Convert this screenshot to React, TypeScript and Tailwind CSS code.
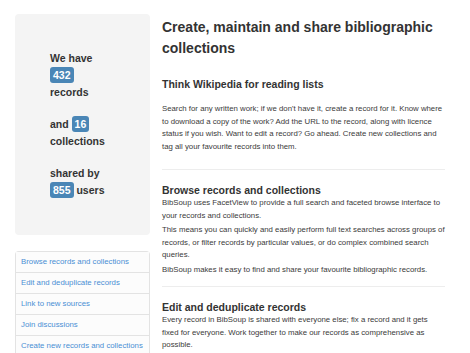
const links = [
  "Browse records and collections",
  "Edit and deduplicate records",
  "Link to new sources",
  "Join discussions",
  "Create new records and collections",
];

function Badge({ n }: { n: number }) {
  return (
    <span className="inline-block rounded-[3px] bg-[#4a86b6] px-[3px] leading-[16px] text-white">
      {n}
    </span>
  );
}

export default function App() {
  return (
    <div
      className="flex h-[353px] w-[470px] gap-3 overflow-hidden bg-white pl-[15px] pt-[14px] text-[#333]"
      style={{ fontFamily: '"Liberation Sans", Arial, sans-serif' }}
    >
      {/* left column: stats well + nav */}
      <div className="flex w-[135px] shrink-0 flex-col">
        <div className="rounded-[4px] bg-[#f4f4f4] pb-[36px] pl-[35px] pt-[36px] text-[10.5px] font-bold leading-[17px] text-[#333]">
          <p>We have</p>
          <p>
            <Badge n={432} />
          </p>
          <p>records</p>
          <p className="mt-[15px]">
            and <Badge n={16} />
          </p>
          <p>collections</p>
          <p className="mt-[15px]">shared by</p>
          <p>
            <Badge n={855} /> users
          </p>
        </div>
        <ul className="mt-[16px] rounded-t-[4px] border border-b-0 border-[#e3e3e3]">
          {links.map((l) => (
            <li
              key={l}
              className="border-b border-[#e3e3e3] bg-[#fcfcfc] pl-[5px] text-[7.8px] leading-[20px] text-[#4a8fd4]"
            >
              {l}
            </li>
          ))}
        </ul>
      </div>

      {/* right column: intro */}
      <div className="w-[283px] shrink-0 text-[7.8px] leading-[12.5px] text-[#3a3a3a]">
        <h1 className="mt-[3px] text-[14px] font-bold leading-[21px] text-[#333]">
          Create, maintain and share bibliographic collections
        </h1>

        <h3 className="mt-[18px] text-[10.5px] font-bold leading-[14px] text-[#333]">
          Think Wikipedia for reading lists
        </h3>
        <p className="mt-[12px]">
          Search for any written work; if we don't have it, create a record for it. Know where
          to download a copy of the work? Add the URL to the record, along with licence
          status if you wish. Want to edit a record? Go ahead. Create new collections and
          tag all your favourite records into them.
        </p>

        <hr className="mt-[16px] border-[#ededed]" />

        <h3 className="mt-[13px] text-[10.5px] font-bold leading-[14px] text-[#333]">
          Browse records and collections
        </h3>
        <p>
          BibSoup uses FacetView to provide a full search and faceted browse interface to
          your records and collections.
        </p>
        <p className="mt-[2px]">
          This means you can quickly and easily perform full text searches across groups of
          records, or filter records by particular values, or do complex combined search
          queries.
        </p>
        <p className="mt-[2px]">
          BibSoup makes it easy to find and share your favourite bibliographic records.
        </p>

        <hr className="mt-[10px] border-[#ededed]" />

        <h3 className="mt-[13px] text-[10.5px] font-bold leading-[14px] text-[#333]">
          Edit and deduplicate records
        </h3>
        <p>
          Every record in BibSoup is shared with everyone else; fix a record and it gets
          fixed for everyone. Work together to make our records as comprehensive as
          possible.
        </p>
        <p className="mt-[2px]">
          We also allow you to merge duplicate records, choosing which fields and versions to keep
          for the combined record.
        </p>
      </div>
    </div>
  );
}
